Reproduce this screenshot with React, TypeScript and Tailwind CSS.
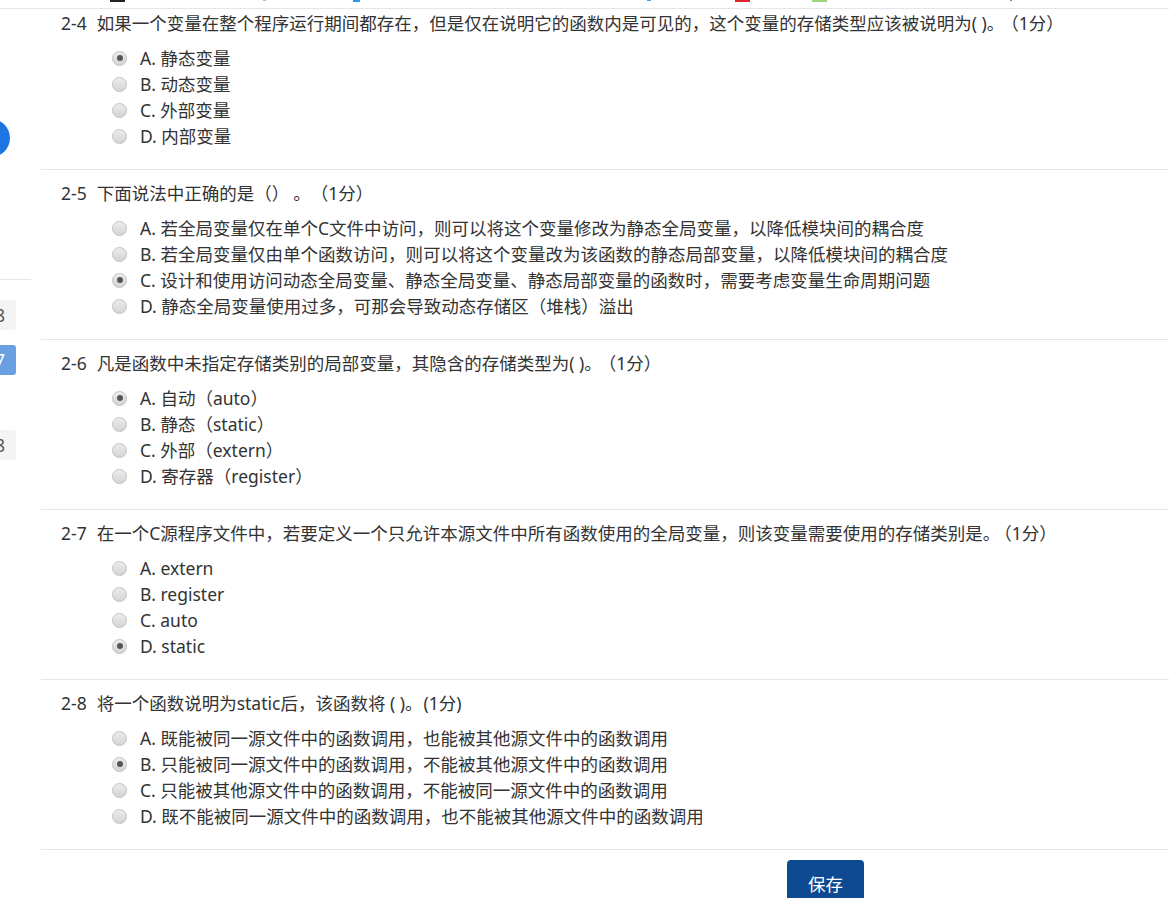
import React from "react";

type Q = { no: string; title: string; dot?: string; score: string; gap: string; options: string[]; checked: number };

const questions: Q[] = [
  {
    no: "2-4",
    title: "如果一个变量在整个程序运行期间都存在，但是仅在说明它的函数内是可见的，这个变量的存储类型应该被说明为( )。",
    score: "（1分）",
    gap: "ml-[-3px]",
    options: ["A. 静态变量", "B. 动态变量", "C. 外部变量", "D. 内部变量"],
    checked: 0,
  },
  {
    no: "2-5",
    title: "下面说法中正确的是（）",
    dot: "。",
    score: "（1分）",
    gap: "",
    options: [
      "A. 若全局变量仅在单个C文件中访问，则可以将这个变量修改为静态全局变量，以降低模块间的耦合度",
      "B. 若全局变量仅由单个函数访问，则可以将这个变量改为该函数的静态局部变量，以降低模块间的耦合度",
      "C. 设计和使用访问动态全局变量、静态全局变量、静态局部变量的函数时，需要考虑变量生命周期问题",
      "D. 静态全局变量使用过多，可那会导致动态存储区（堆栈）溢出",
    ],
    checked: 2,
  },
  {
    no: "2-6",
    title: "凡是函数中未指定存储类别的局部变量，其隐含的存储类型为( )。",
    score: "（1分）",
    gap: "ml-[-3px]",
    options: ["A. 自动（auto）", "B. 静态（static）", "C. 外部（extern）", "D. 寄存器（register）"],
    checked: 0,
  },
  {
    no: "2-7",
    title: "在一个C源程序文件中，若要定义一个只允许本源文件中所有函数使用的全局变量，则该变量需要使用的存储类别是。",
    score: "（1分）",
    gap: "ml-[-6px]",
    options: ["A. extern", "B. register", "C. auto", "D. static"],
    checked: 3,
  },
  {
    no: "2-8",
    title: "将一个函数说明为static后，该函数将 ( )。",
    score: "(1分)",
    gap: "ml-[1px]",
    options: [
      "A. 既能被同一源文件中的函数调用，也能被其他源文件中的函数调用",
      "B. 只能被同一源文件中的函数调用，不能被其他源文件中的函数调用",
      "C. 只能被其他源文件中的函数调用，不能被同一源文件中的函数调用",
      "D. 既不能被同一源文件中的函数调用，也不能被其他源文件中的函数调用",
    ],
    checked: 1,
  },
];

function Radio({ checked }: { checked: boolean }) {
  return (
    <span className="flex h-[15px] w-[15px] shrink-0 items-center justify-center rounded-full border border-[#c2c2c2] bg-gradient-to-b from-[#ececec] to-[#d4d4d4]">
      {checked && <span className="h-[6px] w-[6px] rounded-full bg-[#555]" />}
    </span>
  );
}

export default function App() {
  return (
    <div
      className="relative h-[898px] w-[1169px] overflow-hidden bg-white text-[#333] text-[17.5px]"
      style={{ fontFamily: '"Noto Sans", "Noto Sans CJK SC", sans-serif' }}
    >
      {/* header strip (scrolled off) */}
      <div className="absolute left-0 right-0 top-0 z-10 h-[9px] border-b border-[#e6e6e6] bg-white">
        <span className="absolute left-[110px] top-0 h-[2px] w-[15px] bg-[#222]" />
        <span className="absolute left-[263px] top-0 h-[1px] w-[3px] bg-[#8cc8f5]" />
        <span className="absolute left-[353px] top-0 h-[2px] w-[7px] bg-[#2a9af0]" />
        <span className="absolute left-[647px] top-0 h-[1px] w-[4px] bg-[#3aa0f0]" />
        <span className="absolute left-[735px] top-0 h-[2px] w-[15px] bg-[#d9262c]" />
        <span className="absolute left-[812px] top-0 h-[2px] w-[15px] bg-[#9bd67a]" />
        <span className="absolute left-[1010px] top-0 h-[1px] w-[2px] bg-[#5a9ad0]" />
      </div>

      <div className="flex">
        {/* left sidebar (mostly scrolled off) */}
        <aside className="flex w-[41px] shrink-0 flex-col overflow-hidden">
          <div className="ml-[-28px] mt-[119px] h-[38px] w-[38px] rounded-full bg-[#1c75e0]" />
          <div className="mt-[122px] h-px w-[31px] bg-[#e6e6e6]" />
          <div className="ml-[-16px] mt-[20px] flex h-[30px] w-[32px] items-center justify-center rounded-[3px] bg-[#f4f4f4] text-[#555]">8</div>
          <div className="ml-[-16px] mt-[15px] flex h-[30px] w-[32px] items-center justify-center rounded-[3px] bg-[#6a9fe2] text-white">7</div>
          <div className="ml-[-16px] mt-[55px] flex h-[30px] w-[32px] items-center justify-center rounded-[3px] bg-[#f4f4f4] text-[#555]">8</div>
        </aside>

        <main className="-mt-px flex-1">
          {questions.map((q) => (
            <section key={q.no} className="border-t border-[#e6e6e6] pb-[20px] pl-[20px] pt-[11px]">
              <div className="flex h-[24px] items-center whitespace-pre">
                <span className="mr-[10px]">{q.no}</span>
                <span>{q.title}</span>
                {q.dot && <span className="ml-[4px]">{q.dot}</span>}
                <span className={q.gap}>{q.score}</span>
              </div>
              <div className="mt-[10px] pl-[51px]">
                {q.options.map((o, i) => (
                  <div key={i} className="flex h-[26px] items-center gap-[13px] whitespace-nowrap">
                    <Radio checked={i === q.checked} />
                    <span>{o}</span>
                  </div>
                ))}
              </div>
            </section>
          ))}
          <div className="border-t border-[#e6e6e6] pt-[10px]">
            <button className="ml-[746px] flex h-[42px] w-[77px] items-center justify-center rounded-[4px] bg-[#0d4a91] pt-[7px] text-white">
              保存
            </button>
          </div>
        </main>
      </div>
    </div>
  );
}
